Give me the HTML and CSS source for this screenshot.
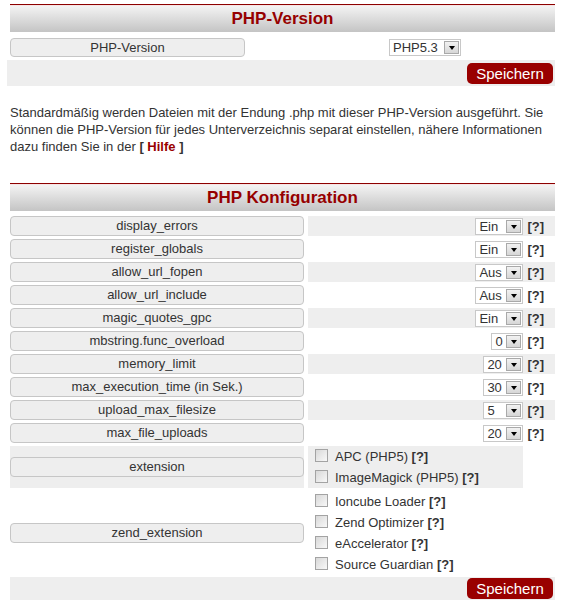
FILE: index.html
```html
<!DOCTYPE html>
<html lang="de">
<head>
<meta charset="utf-8">
<title>PHP-Version</title>
<link rel="stylesheet" href="styles.css">
</head>
<body>
<div class="page">
  <div class="head">PHP-Version</div>
  <div class="row1">
    <div class="lbl lbl1">PHP-Version</div>
    <span class="sel w72"><span class="v">PHP5.3</span><span class="arr"></span></span>
  </div>
  <div class="save save1"><button class="btn">Speichern</button></div>

  <p class="info"><span>Standardmäßig werden Dateien mit der Endung .php mit dieser PHP-Version ausgeführt. Sie können die PHP-Version für jedes Unterverzeichnis separat einstellen, nähere Informationen</span> <span>dazu finden Sie in der</span> <b class="br">[</b> <a class="hilfe" href="#">Hilfe</a> <b class="br">]</b></p>

  <div class="head head2">PHP Konfiguration</div>
  <div class="grid">
    <div class="lbl">display_errors</div>
    <div class="val alt"><span class="sel w48"><span class="v">Ein</span><span class="arr"></span></span><b class="q">[?]</b></div>

    <div class="lbl">register_globals</div>
    <div class="val"><span class="sel w48"><span class="v">Ein</span><span class="arr"></span></span><b class="q">[?]</b></div>

    <div class="lbl">allow_url_fopen</div>
    <div class="val alt"><span class="sel w48"><span class="v">Aus</span><span class="arr"></span></span><b class="q">[?]</b></div>

    <div class="lbl">allow_url_include</div>
    <div class="val"><span class="sel w48"><span class="v">Aus</span><span class="arr"></span></span><b class="q">[?]</b></div>

    <div class="lbl">magic_quotes_gpc</div>
    <div class="val alt"><span class="sel w48"><span class="v">Ein</span><span class="arr"></span></span><b class="q">[?]</b></div>

    <div class="lbl">mbstring.func_overload</div>
    <div class="val"><span class="sel w32"><span class="v">0</span><span class="arr"></span></span><b class="q">[?]</b></div>

    <div class="lbl">memory_limit</div>
    <div class="val alt"><span class="sel w40"><span class="v">20</span><span class="arr"></span></span><b class="q">[?]</b></div>

    <div class="lbl">max_execution_time (in Sek.)</div>
    <div class="val"><span class="sel w40"><span class="v">30</span><span class="arr"></span></span><b class="q">[?]</b></div>

    <div class="lbl">upload_max_filesize</div>
    <div class="val alt"><span class="sel w40"><span class="v">5</span><span class="arr"></span></span><b class="q">[?]</b></div>

    <div class="lbl">max_file_uploads</div>
    <div class="val"><span class="sel w40"><span class="v">20</span><span class="arr"></span></span><b class="q">[?]</b></div>

    <div class="lcell alt"><div class="lbl">extension</div></div>
    <div class="ext">
      <div class="opts alt">
        <div class="cbl"><span class="cb"></span><span>APC (PHP5) <b class="q">[?]</b></span></div>
        <div class="cbl"><span class="cb"></span><span>ImageMagick (PHP5) <b class="q">[?]</b></span></div>
      </div>
    </div>

    <div class="lcell"><div class="lbl">zend_extension</div></div>
    <div class="ext">
      <div class="opts">
        <div class="cbl"><span class="cb"></span><span>Ioncube Loader <b class="q">[?]</b></span></div>
        <div class="cbl"><span class="cb"></span><span>Zend Optimizer <b class="q">[?]</b></span></div>
        <div class="cbl"><span class="cb"></span><span>eAccelerator <b class="q">[?]</b></span></div>
        <div class="cbl"><span class="cb"></span><span>Source Guardian <b class="q">[?]</b></span></div>
      </div>
    </div>
  </div>
  <div class="save save2"><button class="btn">Speichern</button></div>
</div>
</body>
</html>
```

FILE: styles.css
```css
body {
  margin: 0;
  background: #fff;
  color: #333;
  font-family: "Liberation Sans", Arial, sans-serif;
  font-size: 13px;
}

.page {
  width: 545px;
  padding: 4px 7px 0 10px;
}

.head {
  border-top: 1px solid #8c0000;
  height: 27px;
  line-height: 27px;
  background: linear-gradient(#f5f5f5, #c4c4c4);
  box-shadow: inset 0 1px 0 #f7e4e4;
  text-align: center;
  font-weight: bold;
  font-size: 17px;
  color: #960000;
}

.row1 {
  display: flex;
  align-items: center;
  height: 21px;
  margin-top: 5px;
}

.lbl {
  box-sizing: border-box;
  background: #eeeeee;
  border: 1px solid #c6c6c6;
  border-radius: 4px;
  text-align: center;
  height: 20px;
  line-height: 18px;
  white-space: nowrap;
}

.lbl1 {
  width: 235px;
  height: 19px;
  line-height: 17px;
}

.row1 .sel {
  margin-left: 144px;
}

.save {
  display: flex;
  justify-content: flex-end;
  background: #eeeeee;
  box-sizing: border-box;
}

.save1 {
  margin: 2px 0 0 -3px;
  height: 26px;
  padding: 3px 2px 0 0;
}

.save2 {
  margin-top: 2px;
  height: 23px;
  padding: 1px 2px 0 0;
}

.btn {
  background: #990000;
  color: #fff;
  border: 0;
  border-radius: 5px;
  font-family: "Liberation Sans", Arial, sans-serif;
  font-size: 15px;
  height: 21px;
  width: 86px;
  padding: 0;
  line-height: 21px;
}

.info {
  margin: 18px 0 0;
  line-height: 17px;
  width: 550px;
}

.br {
  font-weight: bold;
  color: #333;
}

.hilfe {
  color: #990000;
  font-weight: bold;
  text-decoration: none;
}

.head2 {
  margin-top: 28px;
}

.grid {
  display: grid;
  grid-template-columns: 294px 247px;
  column-gap: 4px;
  row-gap: 3px;
  margin-top: 5px;
}

.alt {
  background: #eeeeee;
}

.val {
  height: 20px;
  display: flex;
  align-items: center;
  justify-content: flex-end;
  gap: 4px;
  padding-right: 11px;
}

.q {
  color: #333;
  font-weight: bold;
}

.sel {
  box-sizing: border-box;
  display: inline-flex;
  align-items: center;
  height: 17px;
  border: 1px solid #c8c8c8;
  background: #fff;
}

.sel .v {
  flex: 1;
  padding-left: 3px;
  line-height: 15px;
  color: #333;
}

.w72 { width: 72px; }
.w48 { width: 48px; }
.w40 { width: 40px; }
.w32 { width: 32px; }

.arr {
  box-sizing: border-box;
  width: 15px;
  height: 13px;
  margin-right: 1px;
  border: 1px solid #a9a9a9;
  background: linear-gradient(#f2f2f2, #d6d6d6);
  display: flex;
  align-items: center;
  justify-content: center;
}

.arr::after {
  content: "";
  border-left: 3px solid transparent;
  border-right: 3px solid transparent;
  border-top: 4px solid #000;
  margin-top: 1px;
}

.lcell {
  display: flex;
  align-items: center;
}

.lcell .lbl {
  width: 100%;
}

.opts {
  width: 215px;
  box-sizing: border-box;
  padding-left: 7px;
}

.cbl {
  height: 21px;
  display: flex;
  align-items: center;
  gap: 7px;
  white-space: nowrap;
}

.cb {
  box-sizing: border-box;
  width: 13px;
  height: 13px;
  border: 1px solid #a3a3a3;
  background: linear-gradient(135deg, #d8d8d8, #f8f8f8);
  margin-top: -3px;
}
```
